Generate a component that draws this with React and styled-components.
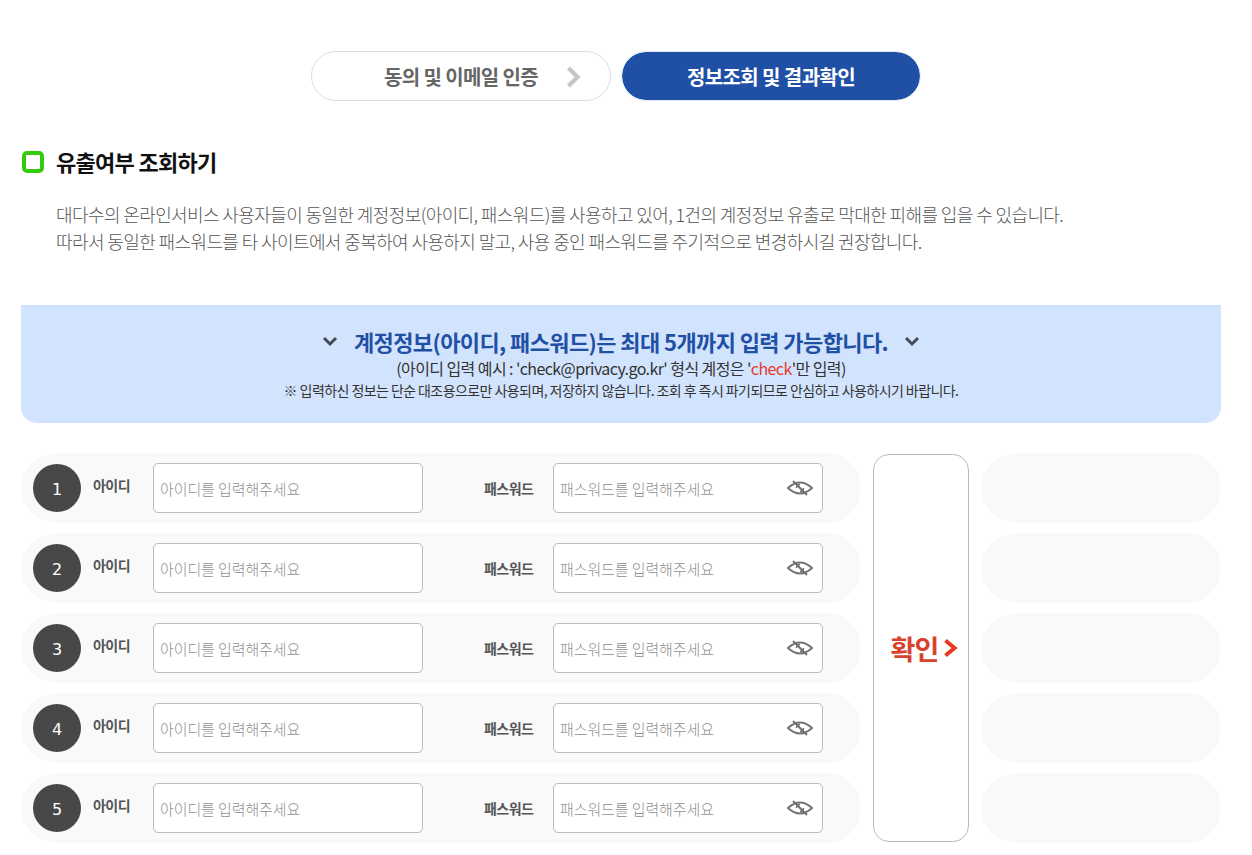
import React from "react";
import styled, { createGlobalStyle } from "styled-components";

const Global = createGlobalStyle`
  html, body { margin: 0; padding: 0; background: #fff; }
  body { font-family: "Noto Sans CJK KR", "Noto Sans", sans-serif; color: #333; }
  * { box-sizing: border-box; }
`;

const Page = styled.div`
  width: 1252px;
  padding: 51px 31px 12px 21px;
`;

const Steps = styled.div`
  display: flex;
  justify-content: center;
  gap: 10px;
  padding-right: 10px;
`;

const Step = styled.div`
  position: relative;
  width: 300px;
  height: 50px;
  border-radius: 25px;
  display: flex;
  align-items: center;
  justify-content: center;
  font-size: 20px;
  font-weight: 700;
  letter-spacing: -0.6px;
  color: ${(p) => (p.$active ? "#fff" : "#666")};
  background: ${(p) => (p.$active ? "#1f50a5" : "#fff")};
  background-clip: padding-box;
  border: 1px solid ${(p) => (p.$active ? "#e6ecf6" : "#ddd")};
`;

const StepArrow = styled.svg`
  position: absolute;
  left: 253px;
  top: 14px;
`;

const Heading = styled.div`
  display: flex;
  align-items: center;
  gap: 12px;
  margin-top: 46px;
  height: 30px;
  padding-left: 1px;
`;

const Mark = styled.span`
  width: 22px;
  height: 22px;
  border: 4px solid #34cc0a;
  border-radius: 5px;
`;

const HeadingText = styled.h2`
  margin: 0 0 3px;
  font-size: 22px;
  font-weight: 700;
  letter-spacing: -0.7px;
  color: #111;
  line-height: 30px;
`;

const Description = styled.p`
  margin: 24px 0 0;
  padding-left: 35px;
  font-size: 18px;
  line-height: 27px;
  font-weight: 300;
  letter-spacing: -0.6px;
  color: #555;
`;

const Notice = styled.div`
  margin-top: 50px;
  height: 118px;
  background: #d2e4fd;
  border-radius: 0 0 16px 16px;
  display: flex;
  flex-direction: column;
  align-items: center;
  padding-top: 19px;
`;

const NoticeTitle = styled.div`
  display: flex;
  align-items: center;
  gap: 16px;
  height: 34px;
  font-size: 22px;
  font-weight: 700;
  letter-spacing: -0.6px;
  color: #1f50a5;
`;

const NoticeSub = styled.div`
  margin-top: -1px;
  font-size: 16px;
  line-height: 22px;
  letter-spacing: -0.58px;
  color: #333;
  font-weight: 400;
`;

const Red = styled.span`
  color: #e8392b;
`;

const NoticeSmall = styled.div`
  margin-top: 1px;
  font-size: 14px;
  line-height: 20px;
  letter-spacing: -0.57px;
  color: #333;
`;

const Form = styled.div`
  display: flex;
  margin-top: 30px;
`;

const Rows = styled.div`
  width: 840px;
  display: flex;
  flex-direction: column;
  gap: 10px;
`;

const Row = styled.div`
  height: 70px;
  border-radius: 35px;
  background: #f9f9f9;
  display: flex;
  align-items: center;
  padding-left: 12px;
`;

const Num = styled.span`
  width: 48px;
  height: 48px;
  border-radius: 50%;
  background: #484848;
  color: #fff;
  display: flex;
  align-items: center;
  justify-content: center;
  font-family: "DejaVu Sans", sans-serif;
  font-size: 16px;
  padding-top: 2px;
`;

const Label = styled.span`
  width: ${(p) => p.$w}px;
  margin-left: ${(p) => p.$ml}px;
  font-size: 14px;
  font-weight: 700;
  letter-spacing: -0.55px;
  color: #555;
  position: relative;
  top: ${(p) => p.$top}px;
`;

const Field = styled.div`
  position: relative;
  width: 270px;
  height: 50px;
  border: 1px solid #bbb;
  border-radius: 5px;
  background: #fff;
  display: flex;
  align-items: center;
  padding-left: 6px;
`;

const Input = styled.input`
  border: 0;
  outline: 0;
  width: 220px;
  padding: 0;
  background: transparent;
  font-family: inherit;
  font-size: 15px;
  letter-spacing: -0.1px;
  font-weight: 300;
  &::placeholder { color: #8f8f8f; opacity: 1; }
`;

const Eye = styled.svg`
  position: absolute;
  right: 9px;
  top: 13px;
`;

const Confirm = styled.button`
  width: 96px;
  height: 388px;
  margin: 1px 12px 0;
  border: 1px solid #bbb;
  border-radius: 16px;
  background: #fff;
  display: flex;
  align-items: center;
  justify-content: center;
  gap: 4px;
  padding: 0 0 0 7px;
  font-family: inherit;
  font-size: 27px;
  font-weight: 700;
  letter-spacing: -0.8px;
  color: #d9412c;
`;

const Results = styled.div`
  width: 240px;
  display: flex;
  flex-direction: column;
  gap: 10px;
`;

const Result = styled.div`
  height: 70px;
  border-radius: 35px;
  background: #f9f9f9;
`;

const Chevron = () => (
  <svg width="16" height="16" viewBox="0 0 16 16" fill="none">
    <path d="M2 5 8 11l6-6" stroke="#444a55" strokeWidth="3" />
  </svg>
);

const EyeIcon = () => (
  <Eye width="26" height="22" viewBox="0 0 26 22" fill="none" stroke="#707070" strokeWidth="2">
    <path d="M1 11Q13 0 25 11 13 22 1 11Z" />
    <path d="M9.5 11a3.5 3.5 0 0 1 3.5-3.5M16.5 11a3.5 3.5 0 0 1-3.5 3.5" strokeWidth="1.5" />
    <path d="M6 4 20 18" />
  </Eye>
);

const numbers = [1, 2, 3, 4, 5];

export default function App() {
  return (
    <Page>
      <Global />
      <Steps>
        <Step>
          동의 및 이메일 인증
          <StepArrow width="18" height="22" viewBox="0 0 18 22" fill="none">
            <path d="M3.5 2 12.5 11 3.5 20" stroke="#c6c6c6" strokeWidth="4.2" />
          </StepArrow>
        </Step>
        <Step $active>정보조회 및 결과확인</Step>
      </Steps>
      <Heading>
        <Mark />
        <HeadingText>유출여부 조회하기</HeadingText>
      </Heading>
      <Description>
        대다수의 온라인서비스 사용자들이 동일한 계정정보(아이디, 패스워드)를 사용하고 있어, 1건의 계정정보 유출로 막대한 피해를 입을 수 있습니다.
        <br />
        따라서 동일한 패스워드를 타 사이트에서 중복하여 사용하지 말고, 사용 중인 패스워드를 주기적으로 변경하시길 권장합니다.
      </Description>
      <Notice>
        <NoticeTitle>
          <Chevron />
          계정정보(아이디, 패스워드)는 최대 5개까지 입력 가능합니다.
          <Chevron />
        </NoticeTitle>
        <NoticeSub>
          (아이디 입력 예시 : 'check@privacy.go.kr' 형식 계정은 '<Red>check</Red>'만 입력)
        </NoticeSub>
        <NoticeSmall>
          ※ 입력하신 정보는 단순 대조용으로만 사용되며, 저장하지 않습니다. 조회 후 즉시 파기되므로 안심하고 사용하시기 바랍니다.
        </NoticeSmall>
      </Notice>
      <Form>
        <Rows>
          {numbers.map((n) => (
            <Row key={n}>
              <Num>{n}</Num>
              <Label $w={60} $ml={12} $top={-3}>아이디</Label>
              <Field>
                <Input placeholder="아이디를 입력해주세요" />
              </Field>
              <Label $w={69} $ml={61} $top={0}>패스워드</Label>
              <Field>
                <Input placeholder="패스워드를 입력해주세요" />
                <EyeIcon />
              </Field>
            </Row>
          ))}
        </Rows>
        <Confirm>
          확인
          <svg width="16" height="20" viewBox="0 0 16 20" fill="none">
            <path d="M2.5 2.5 11.5 10 2.5 17.5" stroke="#e8391c" strokeWidth="4" />
          </svg>
        </Confirm>
        <Results>
          {numbers.map((n) => (
            <Result key={n} />
          ))}
        </Results>
      </Form>
    </Page>
  );
}
